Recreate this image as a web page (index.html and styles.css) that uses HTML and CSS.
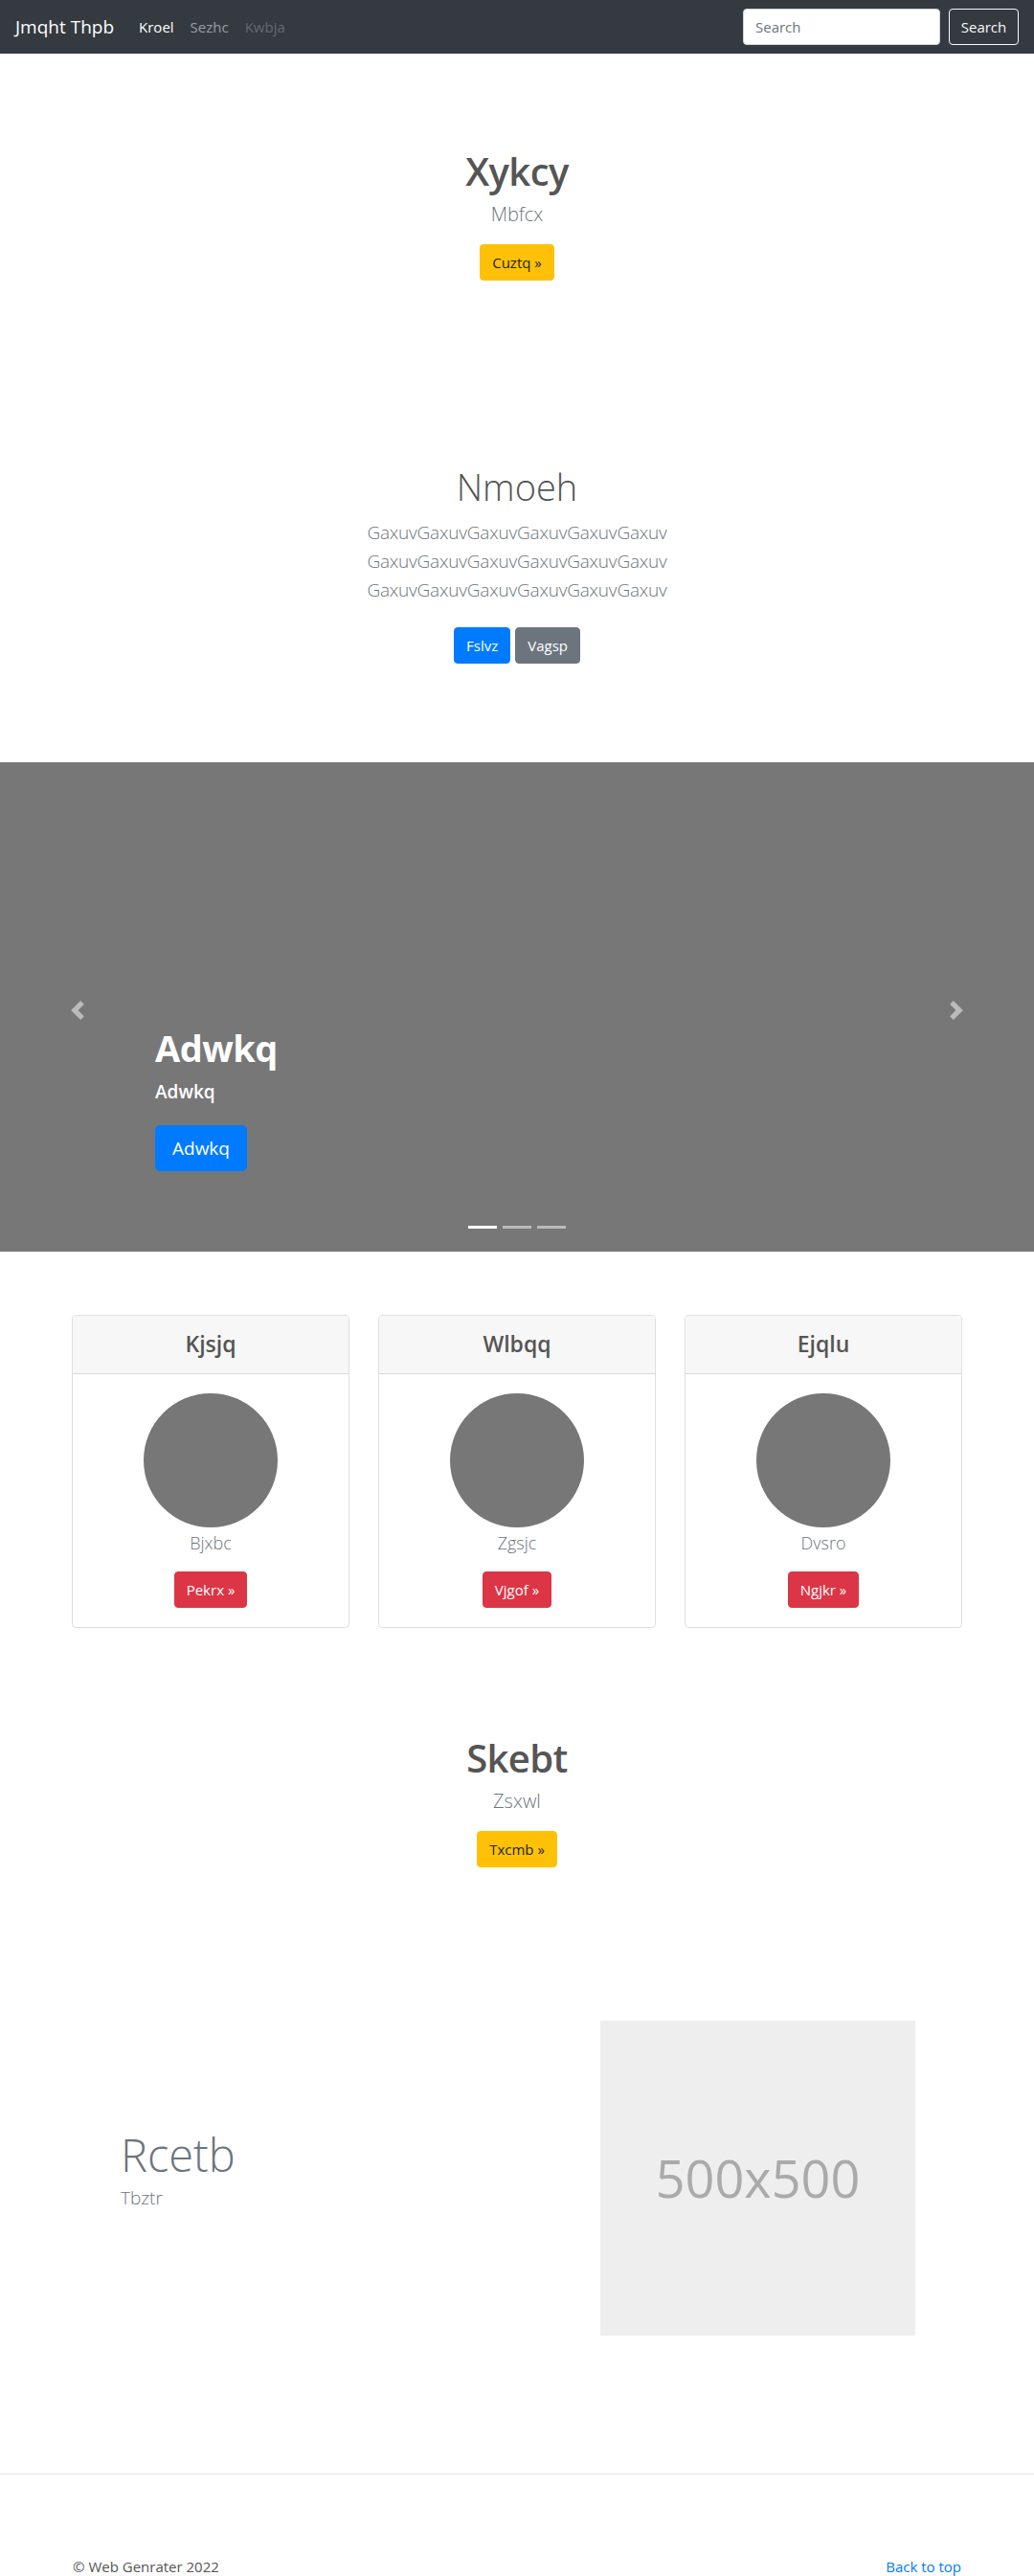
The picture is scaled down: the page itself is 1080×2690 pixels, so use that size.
FILE: index.html
```html
<!DOCTYPE html>
<html lang="en">
<head>
<meta charset="utf-8">
<title>Jmqht Thpb</title>
<link rel="stylesheet" href="styles.css">
</head>
<body>
<nav class="navbar">
  <div class="nav-left">
    <a class="brand" href="#">Jmqht Thpb</a>
    <a class="nav-link active" href="#">Kroel</a>
    <a class="nav-link" href="#">Sezhc</a>
    <a class="nav-link disabled" href="#">Kwbja</a>
  </div>
  <form class="nav-search">
    <input class="search-input" type="text" placeholder="Search">
    <button class="btn-outline" type="button">Search</button>
  </form>
</nav>

<section class="hero hero-one">
  <h1 class="hero-title">Xykcy</h1>
  <p class="lead">Mbfcx</p>
  <a class="btn btn-warning" href="#">Cuztq »</a>
</section>

<section class="hero hero-two">
  <h1 class="display-title">Nmoeh</h1>
  <p class="lead lines">GaxuvGaxuvGaxuvGaxuvGaxuvGaxuv<br>GaxuvGaxuvGaxuvGaxuvGaxuvGaxuv<br>GaxuvGaxuvGaxuvGaxuvGaxuvGaxuv</p>
  <div class="btn-row">
    <a class="btn btn-primary" href="#">Fslvz</a>
    <a class="btn btn-secondary" href="#">Vagsp</a>
  </div>
</section>

<section class="carousel">
  <a class="carousel-control prev" href="#">
    <svg viewBox="0 0 8 8" width="20" height="20"><path d="M5.25 0l-4 4 4 4 1.5-1.5L4.25 4l2.5-2.5L5.25 0z" fill="#fff"/></svg>
  </a>
  <a class="carousel-control next" href="#">
    <svg viewBox="0 0 8 8" width="20" height="20"><path d="M2.75 0l-1.5 1.5L3.75 4l-2.5 2.5L2.75 8l4-4-4-4z" fill="#fff"/></svg>
  </a>
  <div class="carousel-caption">
    <h2 class="caption-title">Adwkq</h2>
    <p class="caption-sub">Adwkq</p>
    <a class="btn btn-primary btn-lg" href="#">Adwkq</a>
  </div>
  <ol class="indicators">
    <li class="active"></li>
    <li></li>
    <li></li>
  </ol>
</section>

<section class="cards">
  <div class="card">
    <div class="card-header">Kjsjq</div>
    <div class="card-body">
      <div class="avatar"></div>
      <p class="card-text">Bjxbc</p>
      <a class="btn btn-danger" href="#">Pekrx »</a>
    </div>
  </div>
  <div class="card">
    <div class="card-header">Wlbqq</div>
    <div class="card-body">
      <div class="avatar"></div>
      <p class="card-text">Zgsjc</p>
      <a class="btn btn-danger" href="#">Vjgof »</a>
    </div>
  </div>
  <div class="card">
    <div class="card-header">Ejqlu</div>
    <div class="card-body">
      <div class="avatar"></div>
      <p class="card-text">Dvsro</p>
      <a class="btn btn-danger" href="#">Ngjkr »</a>
    </div>
  </div>
</section>

<section class="hero hero-three">
  <h1 class="hero-title small">Skebt</h1>
  <p class="lead">Zsxwl</p>
  <a class="btn btn-warning" href="#">Txcmb »</a>
</section>

<section class="featurette">
  <div class="feature-text">
    <h2 class="feature-title">Rcetb</h2>
    <p class="lead feature-lead">Tbztr</p>
  </div>
  <div class="placeholder">500x500</div>
</section>

<hr class="divider">

<footer class="footer">
  <p class="copy">© Web Genrater 2022</p>
  <a class="top-link" href="#">Back to top</a>
</footer>
</body>
</html>
```
FILE: styles.css
```css
* { box-sizing: border-box; }
html, body { margin: 0; padding: 0; }
body {
  font-family: "Open Sans", "Noto Sans", "Liberation Sans", sans-serif;
  font-size: 16px;
  line-height: 1.5;
  color: #212529;
  background: #fff;
  width: 1080px;
}
a { text-decoration: none; }

/* navbar */
.navbar {
  height: 56px;
  background: #343a40;
  display: flex;
  align-items: center;
  justify-content: space-between;
  padding: 0 16px 0 16px;
}
.nav-left { display: flex; align-items: center; }
.brand {
  color: #fff;
  font-size: 19px;
  margin-right: 26px;
  line-height: 30px;
}
.nav-link {
  color: rgba(255,255,255,.5);
  font-size: 15px;
  margin-right: 17px;
}
.nav-link.active { color: #fff; }
.nav-link.disabled { color: rgba(255,255,255,.25); }
.nav-search { display: flex; align-items: center; gap: 9px; }
.search-input {
  width: 206px;
  height: 38px;
  border: 1px solid #ced4da;
  border-radius: 4px;
  padding: 6px 12px;
  font-family: inherit;
  font-size: 15px;
  color: #495057;
  background: #fff;
}
.search-input::placeholder { color: #6c757d; }
.btn-outline {
  height: 38px;
  width: 73px;
  border: 1px solid #f8f9fa;
  border-radius: 4px;
  background: transparent;
  color: #f8f9fa;
  font-family: inherit;
  font-size: 15px;
  padding: 0;
}

/* heroes */
.hero { text-align: center; }
.hero-one { padding: 99px 0 96px; }
.hero-two { padding: 97px 0 103px; }
.hero-three { padding: 112px 0 160px; }
.hero-title {
  margin: 0 0 6px;
  font-size: 40px;
  line-height: 48px;
  font-weight: 600;
  letter-spacing: -0.6px;
  color: #555;
}
.display-title {
  margin: 0 0 9px;
  font-size: 38px;
  line-height: 1.2;
  font-weight: 300;
  color: #555;
}
.lead {
  margin: 0 0 16px;
  font-size: 20px;
  line-height: 30px;
  font-weight: 300;
  color: #6c757d;
}
.lines { font-size: 19px; margin-bottom: 24px; letter-spacing: -0.2px; }
.btn-row { display: flex; justify-content: center; gap: 5px; }
.btn {
  display: inline-block;
  height: 38px;
  line-height: 36px;
  padding: 0 12px;
  border: 1px solid transparent;
  border-radius: 4px;
  font-size: 15px;
}
.btn-warning { background: #ffc107; border-color: #ffc107; color: #212529; }
.btn-primary { background: #007bff; border-color: #007bff; color: #fff; }
.btn-secondary { background: #6c757d; border-color: #6c757d; color: #fff; }
.btn-danger { background: #dc3545; border-color: #dc3545; color: #fff; }
.btn-lg {
  height: 48px;
  line-height: 46px;
  padding: 0 17px;
  font-size: 19px;
  border-radius: 5px;
}

/* carousel */
.carousel {
  position: relative;
  height: 511px;
  background: #777;
}
.carousel-control {
  position: absolute;
  top: 249px;
  width: 20px;
  height: 20px;
  opacity: .5;
}
.carousel-control svg { display: block; }
.carousel-control.prev { left: 71px; }
.carousel-control.next { right: 71px; }
.carousel-caption {
  position: absolute;
  left: 162px;
  bottom: 84px;
  color: #fff;
}
.caption-title {
  margin: 0 0 7px;
  font-size: 38px;
  line-height: 48px;
  font-weight: 700;
  letter-spacing: -0.5px;
}
.caption-sub {
  margin: 0 0 20px;
  font-size: 19px;
  line-height: 30px;
  font-weight: 600;
}
.indicators {
  position: absolute;
  left: 0;
  right: 0;
  bottom: 24px;
  margin: 0;
  padding: 0;
  list-style: none;
  display: flex;
  justify-content: center;
  gap: 6px;
}
.indicators li {
  width: 30px;
  height: 3px;
  background: #fff;
  opacity: .5;
}
.indicators li.active { opacity: 1; }

/* cards */
.cards {
  display: grid;
  grid-template-columns: repeat(3, 290px);
  column-gap: 30px;
  padding: 66px 0 0 75px;
}
.card {
  border: 1px solid rgba(0,0,0,.125);
  border-radius: 4px;
  text-align: center;
  overflow: hidden;
}
.card-header {
  background: #f7f7f7;
  border-bottom: 1px solid rgba(0,0,0,.125);
  padding: 11px 20px 13px;
  font-size: 23px;
  line-height: 36px;
  font-weight: 600;
  color: #555;
}
.card-body { padding: 20px 20px 20px; }
.avatar {
  width: 140px;
  height: 140px;
  border-radius: 50%;
  background: #777;
  margin: 0 auto;
}
.card-text {
  margin: 3px 0 16px;
  font-size: 18px;
  line-height: 27px;
  font-weight: 300;
  color: #6c757d;
}

/* featurette */
.featurette {
  display: flex;
  align-items: center;
  padding: 0 124px 0 126px;
}
.feature-text { flex: 1; }
.feature-title {
  margin: 0 0 2px;
  font-size: 47px;
  line-height: 1.2;
  font-weight: 300;
  color: #6c757d;
}
.feature-lead { font-size: 19px; }
.placeholder {
  width: 329px;
  height: 329px;
  background: #eee;
  color: #aaa;
  font-size: 54px;
  display: flex;
  align-items: center;
  justify-content: center;
}

.divider {
  margin: 144px 0 0;
  border: 0;
  border-top: 1px solid #e5e5e5;
}

.footer {
  display: flex;
  justify-content: space-between;
  padding: 84px 76px 0 76px;
}
.copy {
  margin: 0;
  font-size: 15px;
  line-height: 24px;
  color: #555;
}
.top-link {
  color: #007bff;
  font-size: 15px;
  line-height: 24px;
}
```
